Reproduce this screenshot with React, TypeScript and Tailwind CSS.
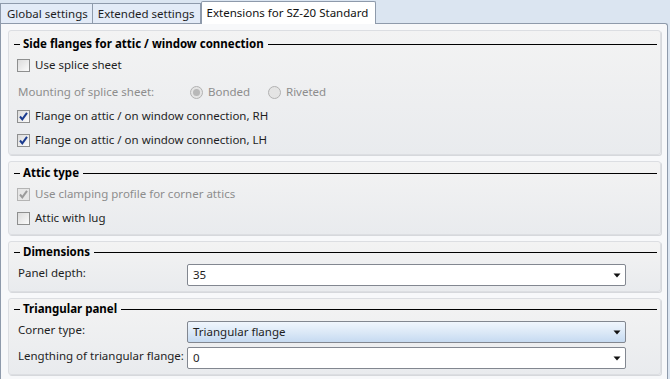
import React from "react";

const font = { fontFamily: '"Noto Sans", "Open Sans", sans-serif' };

function Arrow() {
  return (
    <svg width="8" height="5" viewBox="0 0 8 5" className="shrink-0">
      <path d="M0.5 0.5 H7.5 L4 4.5 Z" fill="#111" />
    </svg>
  );
}

function Checkbox({ checked, disabled }: { checked?: boolean; disabled?: boolean }) {
  return (
    <div
      className={`relative w-[13px] h-[13px] shrink-0 border ${
        disabled ? "border-[#b4b4b4] bg-[#e6e6e6]" : "border-[#8e8f8f] bg-gradient-to-br from-[#dcdcdc] to-[#fbfbfb]"
      }`}
    >
      {checked && (
        <svg width="11" height="11" viewBox="0 0 11 11" className="absolute left-0 top-0">
          <path
            d="M2 5.5 L4.3 8.3 L9 1.8"
            fill="none"
            stroke={disabled ? "#9a9a9a" : "#1a3b8f"}
            strokeWidth="2"
          />
        </svg>
      )}
    </div>
  );
}

function Radio({ checked }: { checked?: boolean }) {
  return (
    <div className="w-[13px] h-[13px] rounded-full border border-[#b2b2b2] bg-[#e4e4e4] flex items-center justify-center shrink-0">
      {checked && <div className="w-[7px] h-[7px] rounded-full bg-[#b8b8b8]" />}
    </div>
  );
}

function Header({ title }: { title: string }) {
  return (
    <div className="h-[18px] flex items-center pl-[5px] pr-[3px]">
      <div className="w-[6px] h-px bg-black" />
      <span className="ml-[3px] mr-[4px] font-bold text-[11.5px] text-black leading-none whitespace-nowrap">{title}</span>
      <div className="flex-1 h-px bg-black" />
    </div>
  );
}

function CheckRow({ label, checked, disabled }: { label: string; checked?: boolean; disabled?: boolean }) {
  return (
    <div className="h-[24px] flex items-center pl-[8px] gap-[5px]">
      <Checkbox checked={checked} disabled={disabled} />
      <span className={`text-[11.5px] ${disabled ? "text-[#8d8d8d]" : "text-[#1e1e1e]"}`}>{label}</span>
    </div>
  );
}

function Group({ children, pt }: { children: React.ReactNode; pt: string }) {
  return (
    <div
      className={`rounded-[3px] border border-[#dcdee2] bg-gradient-to-b from-[#f3f3f3] to-[#e9ebee] shadow-[1px_1px_0_#d6d8dc] ${pt}`}
    >
      {children}
    </div>
  );
}

function Field({ label, value, select }: { label: string; value: string; select?: boolean }) {
  return (
    <div className="flex items-center h-[22px] pl-[9px]">
      <span className="w-[169px] text-[11.5px] text-[#1e1e1e] pb-[5px] whitespace-nowrap">{label}</span>
      <div
        className={`w-[439px] h-[22px] rounded-[2px] border border-[#828790] flex items-center pl-[5px] pr-[4px] ${
          select ? "bg-gradient-to-b from-[#f0f6fd] via-[#dce9f7] to-[#c6daf1]" : "bg-white"
        }`}
      >
        <span className="flex-1 text-[11.5px] text-[#1e1e1e]">{value}</span>
        <Arrow />
      </div>
    </div>
  );
}

export default function App() {
  return (
    <div className="w-[670px] h-[379px] bg-[#dbe5f1] flex flex-col overflow-hidden" style={font}>
      <div className="h-[23px] flex items-end relative z-10">
        <div className="h-[20px] pl-[6px] pr-[4px] border border-b-0 border-[#8e9aab] bg-[#e3ebf7] text-[11.5px] text-[#1e1e1e] flex items-center whitespace-nowrap">
          Global settings
        </div>
        <div className="h-[20px] px-[5px] border border-b-0 border-l-0 border-[#8e9aab] bg-[#e3ebf7] text-[11.5px] text-[#1e1e1e] flex items-center whitespace-nowrap">
          Extended settings
        </div>
        <div className="h-[23px] -mb-px pl-[5px] pr-[7px] border border-b-0 border-[#8e9aab] bg-white text-[11.5px] text-[#111] flex items-center rounded-t-[2px] whitespace-nowrap">
          Extensions for SZ-20 Standard
        </div>
      </div>
      <div className="flex-1 mr-[2px] border border-b-0 border-[#8e9aab] rounded-tr-[3px] bg-[#f7f8fa] pl-[7px] pr-[6px] pt-[6px] flex flex-col gap-[6px]">
        <Group pt="pt-[4px]">
          <Header title="Side flanges for attic / window connection" />
          <CheckRow label="Use splice sheet" />
          <div className="h-[24px] mt-[3px] flex items-center pl-[9px] text-[11.5px] text-[#8d8d8d]">
            <span className="w-[172px]">Mounting of splice sheet:</span>
            <Radio checked />
            <span className="ml-[5px] w-[60px]">Bonded</span>
            <Radio />
            <span className="ml-[5px]">Riveted</span>
          </div>
          <CheckRow label="Flange on attic / on window connection, RH" checked />
          <CheckRow label="Flange on attic / on window connection, LH" checked />
          <div className="h-[2px]" />
        </Group>
        <Group pt="pt-[2px]">
          <Header title="Attic type" />
          <CheckRow label="Use clamping profile for corner attics" checked disabled />
          <CheckRow label="Attic with lug" />
          <div className="h-[4px]" />
        </Group>
        <Group pt="pt-[1px]">
          <Header title="Dimensions" />
          <div className="mt-[3px]">
            <Field label="Panel depth:" value="35" />
          </div>
          <div className="h-[5px]" />
        </Group>
        <Group pt="pt-[1px]">
          <Header title="Triangular panel" />
          <div className="mt-[3px] flex flex-col gap-[4px]">
            <Field label="Corner type:" value="Triangular flange" select />
            <Field label="Lengthing of triangular flange:" value="0" />
          </div>
          <div className="h-[5px]" />
        </Group>
      </div>
    </div>
  );
}
